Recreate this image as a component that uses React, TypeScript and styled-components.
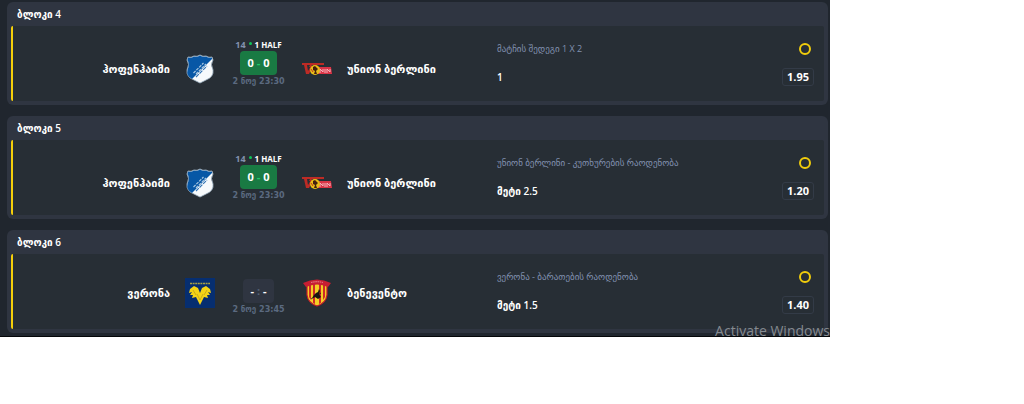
import React from "react";
import styled, { createGlobalStyle } from "styled-components";

const GlobalStyle = createGlobalStyle`
  * { box-sizing: border-box; }
  body {
    margin: 0;
    background: #ffffff;
    font-family: "Open Sans", "DejaVu Sans", sans-serif;
  }
`;

const Panel = styled.main`
  position: relative;
  max-width: 830px;
  overflow: hidden;
  padding: 2px 2px 3px 7px;
  background: #20262e;
  border-bottom: 1px solid #05070a;
`;

const List = styled.div`
  display: flex;
  flex-direction: column;
  gap: 11px;
`;

const Card = styled.section`
  padding: 0 4px 4px;
  border-radius: 6px;
  background: #2f3541;
`;

const CardTitle = styled.h2`
  margin: 0;
  padding: 0 6px;
  font-size: 10px;
  line-height: 24px;
  font-weight: 600;
  color: #ffffff;
`;

const CardBody = styled.div`
  display: grid;
  grid-template-columns: minmax(0, 484fr) minmax(0, 317fr);
  min-height: 75px;
  padding-right: 10px;
  border-left: 2px solid #f5cf0a;
  border-radius: 2px;
  background: #272e35;
`;

const Match = styled.div`
  display: grid;
  grid-template-columns: minmax(0, 1fr) 60px 57px 60px minmax(0, 1fr);
  padding-left: 7px;
`;

const Side = styled.div<{ $live: boolean; $align?: "start" | "center" | "end" }>`
  display: flex;
  align-items: center;
  justify-content: ${(p) => p.$align ?? "center"};
  padding-top: ${(p) => (p.$live ? 10 : 2)}px;
  font-size: 11px;
  line-height: 16px;
  font-weight: 600;
  white-space: nowrap;
  color: #ffffff;
`;

const Middle = styled.div`
  display: flex;
  flex-direction: column;
  align-items: center;
  padding-top: 13px;
  white-space: nowrap;
`;

const Status = styled.div`
  display: flex;
  align-items: center;
  gap: 3px;
  height: 12px;
  font-size: 8px;
  line-height: 12px;
  font-weight: 700;
  color: #ffffff;
`;

const Minute = styled.span`
  font-size: 9px;
  color: #8391ad;
`;

const LiveDot = styled.span`
  width: 3px;
  height: 3px;
  margin-bottom: 3px;
  border-radius: 50%;
  background: #0fc457;
`;

const Score = styled.div<{ $live: boolean }>`
  display: flex;
  align-items: center;
  justify-content: center;
  gap: 3px;
  height: 24px;
  padding: 0 7px;
  border-radius: 4px;
  background: ${(p) => (p.$live ? "#197a43" : "#2f3541")};
  font-size: 11px;
  line-height: 16px;
  font-weight: 700;
  color: #ffffff;
`;

const Divider = styled.span<{ $live: boolean }>`
  color: ${(p) => (p.$live ? "#22c867" : "#566377")};
`;

const Kickoff = styled.time`
  padding-top: 1px;
  font-family: "DejaVu Sans", sans-serif;
  font-size: 8px;
  line-height: 12px;
  font-weight: 700;
  color: #5b6a80;
`;

const Bet = styled.div`
  display: flex;
  flex-direction: column;
  gap: 10px;
  padding-top: 14px;
`;

const BetRow = styled.div`
  display: flex;
  align-items: center;
  justify-content: space-between;
  height: 18px;
  white-space: nowrap;
`;

const Market = styled.span`
  font-size: 9px;
  line-height: 14px;
  color: #8291b0;
`;

const Pick = styled.span`
  font-size: 10px;
  line-height: 14px;
  font-weight: 600;
  color: #ffffff;
`;

const PendingRing = styled.span`
  width: 12px;
  height: 12px;
  margin-right: 3px;
  border: 2px solid #f0cc0c;
  border-radius: 50%;
`;

const Odds = styled.span`
  width: 32px;
  border: 1px solid #333b47;
  border-radius: 3px;
  font-size: 11px;
  line-height: 16px;
  font-weight: 700;
  text-align: center;
  color: #ffffff;
`;

const Watermark = styled.div`
  position: absolute;
  right: 0;
  bottom: -2px;
  font-size: 14px;
  line-height: 14px;
  white-space: nowrap;
  color: #858a8f;
`;

const HoffenheimLogo = () => (
  <svg width="28" height="30" viewBox="0 0 28 30" aria-hidden="true">
    <path d="M2 3Q5 4 8 2Q11 3 14 1Q17 3 20 2Q23 4 26 3L27 6Q24 10 27 16Q28 23 20 26L14 29L8 26Q0 23 1 16Q4 10 1 6Z" fill="#f7fafc" stroke="#9fb4c5" strokeWidth=".8" />
    <path d="M2 3.5Q5 4.5 8 2.5Q11 3.5 14 1.5Q17 3.5 20 2.5Q23 4.5 26 3.5L26 5L6 25Q0 22 1.5 16Q4 10 1.5 6Z" fill="#0757a6" />
    <path d="M7.500 19L17.500 9M10 20L20 10" stroke="#a8c7e2" strokeWidth="1.200" strokeDasharray="3 1" />
    <path d="M10 23L21 12" stroke="#3475b5" strokeWidth="1.200" strokeDasharray="4 1" />
  </svg>
);

const UnionLogo = () => (
  <svg width="30" height="14" viewBox="0 0 30 14" aria-hidden="true">
    <path d="M0 1H22V3H10L9 5H7L8 3H5L6 9L9 4H11L7 12H4L2 3H0Z" fill="#bd2b25" />
    <path d="M15 5H29L30 12H15Z" fill="#dc3446" />
    <path d="M18 11V7L21 10V7M23 7V11M25 11V7L28 10V7" stroke="#f4b5bd" fill="none" />
    <circle cx="13" cy="8" r="5" fill="#e9bd18" />
    <path d="M11 5L13 4L16 7L14 9L15 12H12L13 9L11 8Z" fill="#45200f" />
    <path d="M9 7L11 10" stroke="#c83322" />
  </svg>
);

const VeronaLogo = () => (
  <svg width="30" height="30" viewBox="0 0 30 30" aria-hidden="true">
    <path d="M0 0H30V30H0Z" fill="#062e70" />
    <path d="M5 5.5H25" stroke="#a7a044" strokeWidth="1.3" strokeDasharray="2 .6" />
    <path d="M9 8L13 10L15 15L17 10L21 8L25 11L26 15L23 14L25 17L22 17L23 20L19 19L15 27L11 19L7 20L8 17L5 17L7 14L4 15L5 11Z" fill="#f4d416" />
    <path d="M12 16L15 22L18 16M8 12L11 17M22 12L19 17" stroke="#b89b1d" strokeWidth=".7" fill="none" />
  </svg>
);

const BeneventoLogo = () => (
  <svg width="28" height="28" viewBox="0 0 28 28" aria-hidden="true">
    <path d="M4 4H24V16Q23 24 14 27Q5 24 4 16Z" fill="#f3ce25" stroke="#c51b2a" strokeWidth="1.2" />
    <path d="M6 5H8V21L6 18ZM10 5H12V25L10 24ZM16 5H18V24L16 25ZM20 5H22V18L20 21Z" fill="#d02a28" />
    <path d="M0 4Q14 -3 28 4L25 8Q14 3 3 8Z" fill="#c71e32" />
    <path d="M8 3.5Q14 2 20 3.5" stroke="#ed9096" fill="none" strokeDasharray="1.5 .7" />
    <path d="M16 10L17 12L16 15L18 18L15 20L12 18L9 19L11 16L13 14L15 13Z" fill="#191511" />
    <path d="M8 20L18 14" stroke="#191511" strokeWidth=".8" />
  </svg>
);

type Block = {
  title: string;
  live: boolean;
  home: string;
  away: string;
  HomeLogo: () => React.JSX.Element;
  AwayLogo: () => React.JSX.Element;
  score: [string, string, string];
  kickoff: string;
  market: string;
  pick: string;
  odds: string;
};

const blocks: Block[] = [
  {
    title: "ბლოკი 4", live: true, home: "ჰოფენჰაიმი", away: "უნიონ ბერლინი",
    HomeLogo: HoffenheimLogo, AwayLogo: UnionLogo, score: ["0", "-", "0"],
    kickoff: "2 ნოე 23:30", market: "მატჩის შედეგი 1 X 2", pick: "1", odds: "1.95",
  },
  {
    title: "ბლოკი 5", live: true, home: "ჰოფენჰაიმი", away: "უნიონ ბერლინი",
    HomeLogo: HoffenheimLogo, AwayLogo: UnionLogo, score: ["0", "-", "0"],
    kickoff: "2 ნოე 23:30", market: "უნიონ ბერლინი - კუთხურების რაოდენობა", pick: "მეტი 2.5", odds: "1.20",
  },
  {
    title: "ბლოკი 6", live: false, home: "ვერონა", away: "ბენევენტო",
    HomeLogo: VeronaLogo, AwayLogo: BeneventoLogo, score: ["-", ":", "-"],
    kickoff: "2 ნოე 23:45", market: "ვერონა - ბარათების რაოდენობა", pick: "მეტი 1.5", odds: "1.40",
  },
];

const BlockCard = ({ block }: { block: Block }) => {
  const { HomeLogo, AwayLogo, live } = block;
  return (
    <Card>
      <CardTitle>{block.title}</CardTitle>
      <CardBody>
        <Match>
          <Side $live={live} $align="end">{block.home}</Side>
          <Side $live={live}><HomeLogo /></Side>
          <Middle>
            <Status>
              {live && (
                <>
                  <Minute>14</Minute>
                  <LiveDot />
                  <span>1 HALF</span>
                </>
              )}
            </Status>
            <Score $live={live}>
              <span>{block.score[0]}</span>
              <Divider $live={live}>{block.score[1]}</Divider>
              <span>{block.score[2]}</span>
            </Score>
            <Kickoff>{block.kickoff}</Kickoff>
          </Middle>
          <Side $live={live}><AwayLogo /></Side>
          <Side $live={live} $align="start">{block.away}</Side>
        </Match>
        <Bet>
          <BetRow>
            <Market>{block.market}</Market>
            <PendingRing />
          </BetRow>
          <BetRow>
            <Pick>{block.pick}</Pick>
            <Odds>{block.odds}</Odds>
          </BetRow>
        </Bet>
      </CardBody>
    </Card>
  );
};

export default function App() {
  return (
    <>
      <GlobalStyle />
      <Panel>
        <List>
          {blocks.map((block) => (
            <BlockCard key={block.title} block={block} />
          ))}
        </List>
        <Watermark>Activate Windows</Watermark>
      </Panel>
    </>
  );
}
